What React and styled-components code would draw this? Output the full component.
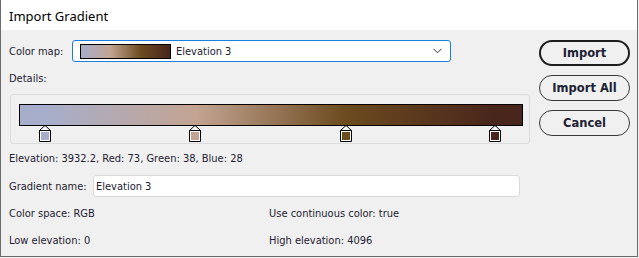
import React from "react";
import styled, { createGlobalStyle } from "styled-components";

const Global = createGlobalStyle`
  html, body { margin: 0; padding: 0; background: #f0f0f0; }
  body { font-family: "DejaVu Sans Condensed", "DejaVu Sans", Tahoma, sans-serif; }
`;

const STOPS = [
  { pos: 5.2, color: "#a7aecb" },
  { pos: 35.0, color: "#c3a492" },
  { pos: 64.8, color: "#6c4b1f" },
  { pos: 94.4, color: "#49261c" },
];

const barGradient = `linear-gradient(to right, #a7aecb 0%, #a7aecb 5.2%, #c3a492 35%, #6c4b1f 64.8%, #49261c 94.4%, #49261c 100%)`;
const swatchGradient = `linear-gradient(to right, #a7aecb 0%, #c3a492 33%, #6c4b1f 67%, #49261c 100%)`;

const Window = styled.div`
  width: 638px;
  height: 257px;
  box-sizing: border-box;
  border: 1px solid #6b6b6b;
  border-top: none;
  background: #f0f0f0;
  display: flex;
  flex-direction: column;
  color: #1e2130;
`;

const TitleBar = styled.div`
  height: 30px;
  box-sizing: border-box;
  flex: none;
  background: #fff;
  display: flex;
  align-items: center;
  padding: 2px 0 0 8px;
  font-family: "Noto Sans", "Segoe UI", sans-serif;
  font-size: 13px;
  color: #000;
`;

const Content = styled.div`
  flex: 1;
  display: flex;
`;

const Main = styled.div`
  width: 530px;
  padding: 10px 0 0 8px;
  box-sizing: border-box;
  display: flex;
  flex-direction: column;
`;

const Label = styled.div`
  font-size: 11px;
  line-height: 14px;
  padding-top: 1px;
  white-space: nowrap;
  margin-top: ${(p) => p.$mt || 0}px;
`;

const FieldRow = styled.div`
  display: flex;
  align-items: center;
  height: 22px;
  margin-top: ${(p) => p.$mt || 0}px;
`;

const RowLabel = styled.div`
  font-size: 11px;
  padding-top: 1px;
  width: ${(p) => p.$w}px;
  flex: none;
  white-space: nowrap;
`;

const Combo = styled.div`
  width: 379px;
  height: 22px;
  box-sizing: border-box;
  border: 1px solid #1a7fe0;
  border-radius: 3px;
  background: #fff;
  display: flex;
  align-items: center;
  padding-left: 7px;
`;

const Swatch = styled.div`
  width: 91px;
  height: 15px;
  box-sizing: border-box;
  border: 1px solid #000;
  background: ${swatchGradient};
  flex: none;
`;

const ComboText = styled.span`
  font-size: 11px;
  padding-top: 1px;
  margin-left: 5px;
  flex: 1;
`;

const Chevron = styled.svg`
  margin-right: 8px;
  flex: none;
`;

const GroupBox = styled.div`
  margin-top: 8px;
  margin-left: 1px;
  width: 520px;
  height: 50px;
  box-sizing: border-box;
  border: 1px solid #dcdcdc;
  border-radius: 3px;
  padding: 9px 0 0 8px;
`;

const Track = styled.div`
  position: relative;
  width: 504px;
`;

const Bar = styled.div`
  height: 22px;
  box-sizing: border-box;
  border: 1px solid #000;
  background: ${barGradient};
`;

const Marker = styled.svg`
  position: absolute;
  top: 21px;
  transform: translateX(-6px);
`;

const Input = styled.div`
  width: 427px;
  height: 22px;
  box-sizing: border-box;
  border: 1px solid #d9d9d9;
  border-radius: 3px;
  background: #fff;
  display: flex;
  align-items: center;
  padding: 1px 0 0 2px;
  font-size: 11px;
`;

const InfoRow = styled.div`
  display: grid;
  grid-template-columns: 260px 1fr;
  font-size: 11px;
  line-height: 14px;
  padding-top: 1px;
  margin-top: ${(p) => p.$mt || 0}px;
`;

const Buttons = styled.div`
  display: flex;
  flex-direction: column;
  gap: 9px;
  padding-top: 10px;
  margin-left: 8px;
`;

const Button = styled.button`
  width: 91px;
  height: 26px;
  box-sizing: border-box;
  border-radius: 13px;
  border: ${(p) => (p.$default ? "2px solid #1f1f1f" : "1px solid #3a3a3a")};
  background: #f0f0f0;
  font-family: "DejaVu Sans", Tahoma, sans-serif;
  font-weight: bold;
  font-size: 11.5px;
  color: #1c2233;
  padding: 0;
  cursor: pointer;
`;

function StopMarker({ pos, color }) {
  return (
    <Marker width="12" height="17" viewBox="0 0 12 17" style={{ left: `${pos}%` }}>
      <polygon points="0.5,5.5 6,0.5 11.5,5.5 11.5,16.5 0.5,16.5" fill="#fff" stroke="#000" strokeWidth="1" />
      <line x1="0.5" y1="5.5" x2="11.5" y2="5.5" stroke="#000" strokeWidth="1" />
      <rect x="2" y="7" width="8" height="8" fill={color} />
    </Marker>
  );
}

export default function App() {
  return (
    <>
      <Global />
      <Window>
        <TitleBar>Import Gradient</TitleBar>
        <Content>
          <Main>
            <FieldRow>
              <RowLabel $w={63}>Color map:</RowLabel>
              <Combo>
                <Swatch />
                <ComboText>Elevation 3</ComboText>
                <Chevron width="9" height="6" viewBox="0 0 9 6">
                  <polyline points="0.5,0.8 4.5,4.8 8.5,0.8" fill="none" stroke="#333" strokeWidth="1" />
                </Chevron>
              </Combo>
            </FieldRow>
            <Label $mt={9}>Details:</Label>
            <GroupBox>
              <Track>
                <Bar />
                {STOPS.map((s) => (
                  <StopMarker key={s.pos} pos={s.pos} color={s.color} />
                ))}
              </Track>
            </GroupBox>
            <Label $mt={7}>Elevation: 3932.2, Red: 73, Green: 38, Blue: 28</Label>
            <FieldRow $mt={9}>
              <RowLabel $w={84}>Gradient name:</RowLabel>
              <Input>Elevation 3</Input>
            </FieldRow>
            <InfoRow $mt={9}>
              <span>Color space: RGB</span>
              <span>Use continuous color: true</span>
            </InfoRow>
            <InfoRow $mt={12}>
              <span>Low elevation: 0</span>
              <span>High elevation: 4096</span>
            </InfoRow>
          </Main>
          <Buttons>
            <Button $default>Import</Button>
            <Button>Import All</Button>
            <Button>Cancel</Button>
          </Buttons>
        </Content>
      </Window>
    </>
  );
}
